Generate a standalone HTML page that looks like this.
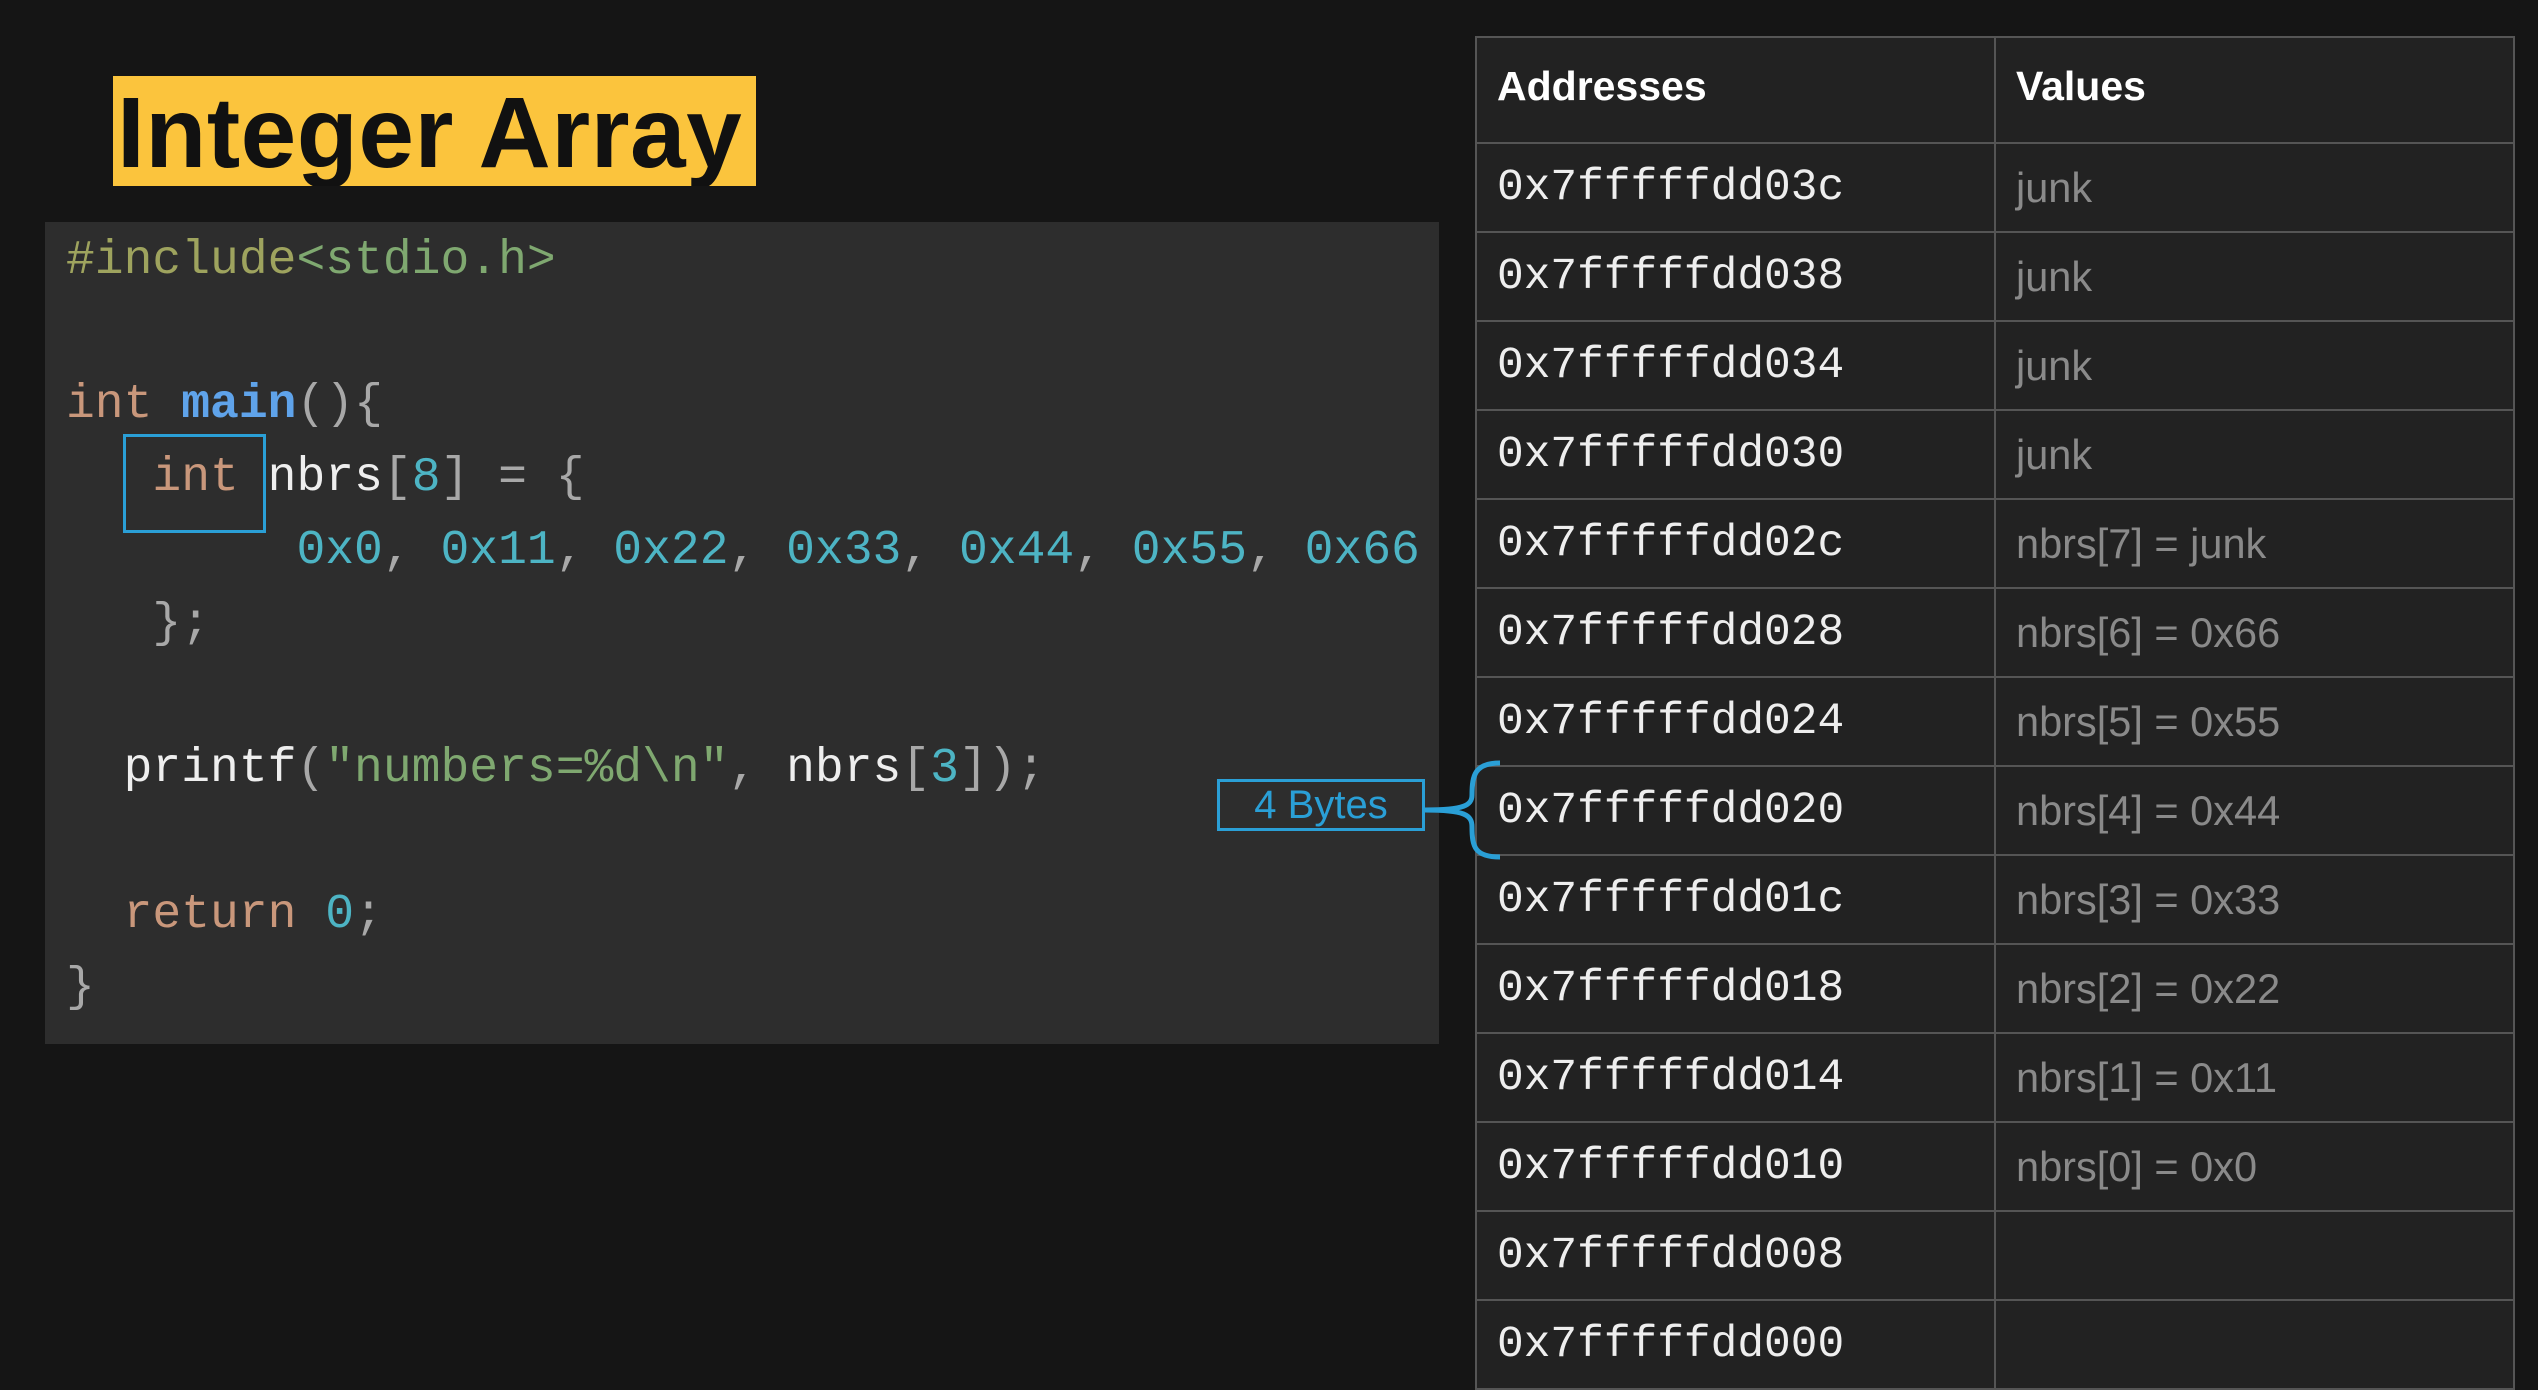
<!DOCTYPE html>
<html><head><style>
body{margin:0;width:2538px;height:1386px;background:#151515;overflow:hidden;position:relative;font-family:"Liberation Sans",sans-serif}
.title{position:absolute;left:113px;top:76px;width:643px;height:110px;background:#fbc43d;color:#111;font-weight:bold;font-size:100px;line-height:114px;letter-spacing:0.5px;text-indent:4px;white-space:nowrap;overflow:hidden}
.code{position:absolute;left:45px;top:222px;width:1394px;height:822px;background:#2d2d2d}
.ln{position:absolute;left:66px;font-family:"Liberation Mono",monospace;font-size:48px;white-space:pre;color:#ddd;line-height:60px}
.o{color:#c9977b}.b{color:#5fa3ea;font-weight:bold}.g{color:#7fa870}.y{color:#9ea35e}.t{color:#4db4c4}.p{color:#a8a8a8}.w{color:#eee}
table{position:absolute;left:1475px;top:36px;border-collapse:collapse;background:#222}
td{border:2px solid #555;height:87px;padding:0 0 0 20px;font-size:41.5px;color:#8a8a8a}
td.a{width:497px;font-family:"Liberation Mono",monospace;font-size:44.5px;color:#eee}
td.v{width:497px}
th{border:2px solid #555;height:96px;text-align:left;padding:0 0 8px 20px;font-size:41px;color:#fff}
</style></head><body>
<div class="title">Integer Array</div>
<div class="code"></div>
<div class="ln" style="top:231px"><span class="y">#include</span><span class="g">&lt;stdio.h&gt;</span></div>
<div class="ln" style="top:375px"><span class="o">int</span> <span class="b">main</span><span class="p">(){</span></div>
<div class="ln" style="top:448px">   <span class="o">int</span> <span class="w">nbrs</span><span class="p">[</span><span class="t">8</span><span class="p">] = {</span></div>
<div class="ln" style="top:521px">        <span class="t">0x0</span><span class="p">, </span><span class="t">0x11</span><span class="p">, </span><span class="t">0x22</span><span class="p">, </span><span class="t">0x33</span><span class="p">, </span><span class="t">0x44</span><span class="p">, </span><span class="t">0x55</span><span class="p">, </span><span class="t">0x66</span></div>
<div class="ln" style="top:594px">   <span class="p">};</span></div>
<div class="ln" style="top:739px">  <span class="w">printf</span><span class="p">(</span><span class="g">"numbers=%d\n"</span><span class="p">, </span><span class="w">nbrs</span><span class="p">[</span><span class="t">3</span><span class="p">]);</span></div>
<div class="ln" style="top:885px">  <span class="o">return</span> <span class="t">0</span><span class="p">;</span></div>
<div class="ln" style="top:958px"><span class="p">}</span></div>
<div style="position:absolute;left:123px;top:434px;width:137px;height:93px;border:3px solid #2a9fd6"></div>
<div style="position:absolute;left:1217px;top:779px;width:202px;height:46px;border:3px solid #2a9fd6;color:#2a9fd6;font-size:40px;line-height:46px;text-align:center">4 Bytes</div>
<table>
<tr><th>Addresses</th><th>Values</th></tr>
<tr><td class="a">0x7fffffdd03c</td><td class="v">junk</td></tr>
<tr><td class="a">0x7fffffdd038</td><td class="v">junk</td></tr>
<tr><td class="a">0x7fffffdd034</td><td class="v">junk</td></tr>
<tr><td class="a">0x7fffffdd030</td><td class="v">junk</td></tr>
<tr><td class="a">0x7fffffdd02c</td><td class="v">nbrs[7] = junk</td></tr>
<tr><td class="a">0x7fffffdd028</td><td class="v">nbrs[6] = 0x66</td></tr>
<tr><td class="a">0x7fffffdd024</td><td class="v">nbrs[5] = 0x55</td></tr>
<tr><td class="a">0x7fffffdd020</td><td class="v">nbrs[4] = 0x44</td></tr>
<tr><td class="a">0x7fffffdd01c</td><td class="v">nbrs[3] = 0x33</td></tr>
<tr><td class="a">0x7fffffdd018</td><td class="v">nbrs[2] = 0x22</td></tr>
<tr><td class="a">0x7fffffdd014</td><td class="v">nbrs[1] = 0x11</td></tr>
<tr><td class="a">0x7fffffdd010</td><td class="v">nbrs[0] = 0x0</td></tr>
<tr><td class="a">0x7fffffdd008</td><td class="v"></td></tr>
<tr><td class="a">0x7fffffdd000</td><td class="v"></td></tr>
</table>
<svg style="position:absolute;left:1420px;top:755px;z-index:5" width="100" height="110"><path d="M80 8 C55 8 52 20 52 40 C52 50 45 55 5 55 C45 55 52 60 52 72 C52 92 55 102 80 102" fill="none" stroke="#2a9fd6" stroke-width="5"/></svg>
</body></html>
